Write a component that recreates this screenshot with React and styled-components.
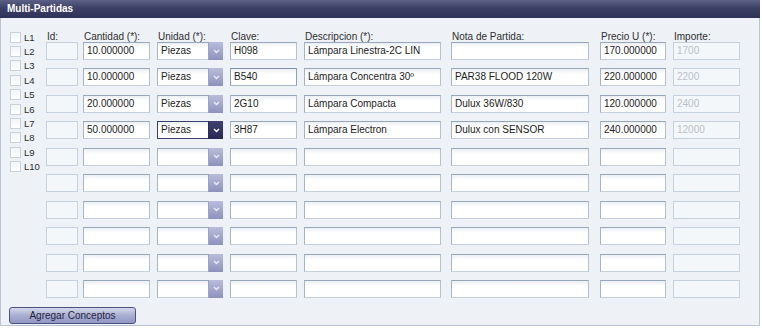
import styled, { createGlobalStyle } from "styled-components";

const GlobalStyle = createGlobalStyle`
  body {
    margin: 0;
    background: #ffffff;
    font-family: "Liberation Sans", Arial, sans-serif;
  }
`;

const COLUMNS = "37px 74px 73px 74px 147px 149px 73px 67px";

const Panel = styled.div`
  width: 760px;
  height: 326px;
  box-sizing: border-box;
  background: #eef2f7;
  border: 1px solid #b9c3d1;
  border-top: none;
  display: flex;
  flex-direction: column;
`;

const TitleBar = styled.div`
  height: 18px;
  margin: 0 -1px;
  padding-left: 7px;
  background: linear-gradient(#5d6186, #3d4066 45%, #2f3258);
  color: #ffffff;
  font-size: 10px;
  font-weight: bold;
  line-height: 18px;
`;

const Body = styled.div`
  display: flex;
  padding-top: 12px;
`;

const LineList = styled.div`
  width: 45px;
  padding-left: 9px;
  box-sizing: border-box;
  display: flex;
  flex-direction: column;
`;

const LineItem = styled.label`
  height: 14.4px;
  display: flex;
  align-items: center;
  gap: 3px;
  font-size: 9.5px;
  color: #2b2b2b;
`;

const CheckBox = styled.span`
  width: 11px;
  height: 11px;
  box-sizing: border-box;
  border: 1px solid #c9d1dc;
  background: linear-gradient(#f2f4f7, #ffffff);
`;

const Grid = styled.div`
  margin-top: 1px;
  display: flex;
  flex-direction: column;
`;

const HeaderRow = styled.div`
  display: grid;
  grid-template-columns: ${COLUMNS};
  height: 11px;
`;

const Header = styled.div`
  font-size: 10px;
  line-height: 8px;
  padding-top: 2px;
  color: #2e2e2e;
  padding-left: 1px;
  white-space: nowrap;
`;

const Rows = styled.div`
  display: flex;
  flex-direction: column;
  gap: 8.44px;
`;

const Row = styled.div`
  display: grid;
  grid-template-columns: ${COLUMNS};
  height: 18px;
`;

const Field = styled.div`
  width: ${(p) => p.$w}px;
  height: 18px;
  box-sizing: border-box;
  border: 1px solid;
  border-color: ${(p) =>
    p.$disabled
      ? "#c6d1dd"
      : p.$focus
      ? "#7d90aa #8fa1b8 #a9b7c7 #8fa1b8"
      : "#97a6b8 #b3c0ce #c6d0dc #a7b4c4"};
  background: ${(p) =>
    p.$disabled ? "#f4f7fa" : "linear-gradient(#eceff3, #ffffff 5px)"};
  color: ${(p) => (p.$disabled ? "#b9c0c9" : "#1c1c1c")};
  font-size: 10px;
  line-height: 16px;
  padding-left: 3px;
  white-space: nowrap;
  overflow: hidden;
`;

const Select = styled.div`
  width: 66px;
  height: 18px;
  box-sizing: border-box;
  display: flex;
  border: 1px solid;
  border-color: ${(p) =>
    p.$focus ? "#3b3f6b" : "#97a6b8 #b3c0ce #c6d0dc #a7b4c4"};
  background: linear-gradient(#eceff3, #ffffff 5px);
`;

const SelectText = styled.div`
  flex: 1;
  font-size: 10px;
  line-height: 16px;
  padding-left: 3px;
  color: #1c1c1c;
`;

const SelectButton = styled.div`
  width: 14px;
  margin: -1px -1px -1px 0;
  display: flex;
  align-items: center;
  justify-content: center;
  background: ${(p) =>
    p.$focus
      ? "linear-gradient(#3e4272, #262957)"
      : "linear-gradient(#b9bddb, #8d92bd)"};
  border-left: 1px solid ${(p) => (p.$focus ? "#2a2d58" : "#9ca1c6")};
`;

const Footer = styled.div`
  margin-top: 7px;
  padding-left: 8px;
`;

const Button = styled.button`
  width: 127px;
  height: 17px;
  padding: 0;
  box-sizing: border-box;
  border: 1px solid #4c5180;
  border-radius: 3px;
  background: linear-gradient(#d4d7ea, #a9aed2 50%, #9197c3);
  font-family: "Liberation Sans", Arial, sans-serif;
  font-size: 10px;
  color: #1e2140;
`;

const Chevron = ({ focus }) => (
  <svg width="7" height="5" viewBox="0 0 7 5">
    <polyline
      points="1,1 3.5,3.5 6,1"
      fill="none"
      stroke={focus ? "#ffffff" : "#e9ebf6"}
      strokeWidth="1.4"
    />
  </svg>
);

const headers = [
  "Id:",
  "Cantidad (*):",
  "Unidad (*):",
  "Clave:",
  "Descripcion (*):",
  "Nota de Partida:",
  "Precio U (*):",
  "Importe:",
];

const data = [
  { qty: "10.000000", unit: "Piezas", key: "H098", desc: "Lámpara Linestra-2C LIN", note: "", price: "170.000000", total: "1700" },
  { qty: "10.000000", unit: "Piezas", key: "B540", desc: "Lámpara Concentra 30º", note: "PAR38 FLOOD 120W", price: "220.000000", total: "2200", keyFocus: true },
  { qty: "20.000000", unit: "Piezas", key: "2G10", desc: "Lámpara Compacta", note: "Dulux 36W/830", price: "120.000000", total: "2400" },
  { qty: "50.000000", unit: "Piezas", key: "3H87", desc: "Lámpara Electron", note: "Dulux con SENSOR", price: "240.000000", total: "12000", focus: true },
];

const rows = Array.from({ length: 10 }, (_, i) => data[i] || {});

const App = () => {
  return (
    <>
      <GlobalStyle />
      <Panel>
        <TitleBar>Multi-Partidas</TitleBar>
        <Body>
          <LineList>
            {Array.from({ length: 10 }, (_, i) => (
              <LineItem key={i}>
                <CheckBox />
                L{i + 1}
              </LineItem>
            ))}
          </LineList>
          <Grid>
            <HeaderRow>
              {headers.map((h) => (
                <Header key={h}>{h}</Header>
              ))}
            </HeaderRow>
            <Rows>
              {rows.map((r, i) => (
                <Row key={i}>
                  <Field $w={32} $disabled />
                  <Field $w={67}>{r.qty}</Field>
                  <Select $focus={r.focus}>
                    <SelectText>{r.unit}</SelectText>
                    <SelectButton $focus={r.focus}>
                      <Chevron focus={r.focus} />
                    </SelectButton>
                  </Select>
                  <Field $w={67} $focus={r.keyFocus}>{r.key}</Field>
                  <Field $w={137}>{r.desc}</Field>
                  <Field $w={138}>{r.note}</Field>
                  <Field $w={66}>{r.price}</Field>
                  <Field $w={67} $disabled>{r.total}</Field>
                </Row>
              ))}
            </Rows>
          </Grid>
        </Body>
        <Footer>
          <Button>Agregar Conceptos</Button>
        </Footer>
      </Panel>
    </>
  );
};

export default App;
